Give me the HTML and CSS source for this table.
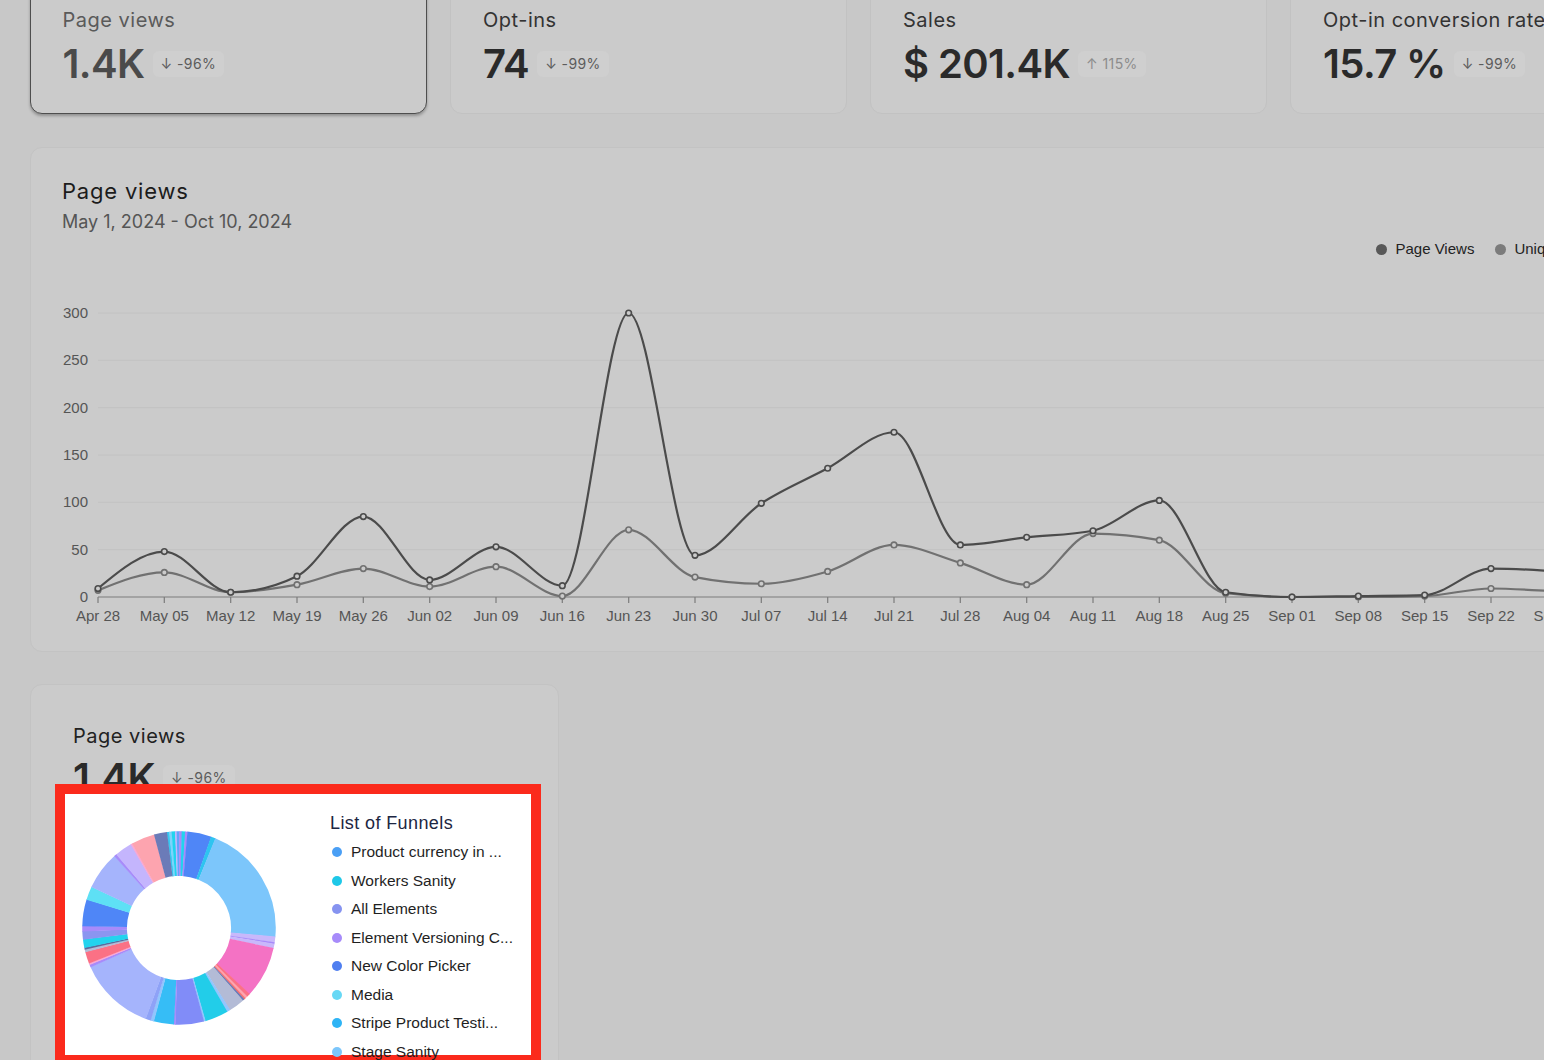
FILE: index.html
```html
<!DOCTYPE html>
<html lang="en">
<head>
<meta charset="utf-8">
<title>Funnel analytics</title>
<link rel="stylesheet" href="styles.css">
</head>
<body>
<div class="page">
  <section class="stats">
    <div class="stat stat--active">
      <div class="stat-label">Page views</div>
      <div class="stat-row"><span class="stat-value">1.4K</span><span class="badge">↓ -96%</span></div>
    </div>
    <div class="stat">
      <div class="stat-label">Opt-ins</div>
      <div class="stat-row"><span class="stat-value">74</span><span class="badge">↓ -99%</span></div>
    </div>
    <div class="stat">
      <div class="stat-label">Sales</div>
      <div class="stat-row"><span class="stat-value">$ 201.4K</span><span class="badge badge--up">↑ 115%</span></div>
    </div>
    <div class="stat">
      <div class="stat-label">Opt-in conversion rate</div>
      <div class="stat-row"><span class="stat-value">15.7 %</span><span class="badge">↓ -99%</span></div>
    </div>
  </section>

  <section class="card chart-card">
    <div class="chart-head">
      <h2 class="chart-title">Page views</h2>
      <div class="chart-date">May 1, 2024 - Oct 10, 2024</div>
    </div>
    <div class="legend">
      <span class="legend-item"><i class="ldot ldot--pv"></i>Page Views</span>
      <span class="legend-item"><i class="ldot ldot--uv"></i>Unique Visitors</span>
    </div>
    <svg class="chart" width="1655" height="370" viewBox="0 0 1655 370">
      <g class="grid">
        <line x1="67" x2="1655" y1="48" y2="48"/>
        <line x1="67" x2="1655" y1="95.3" y2="95.3"/>
        <line x1="67" x2="1655" y1="142.7" y2="142.7"/>
        <line x1="67" x2="1655" y1="190" y2="190"/>
        <line x1="67" x2="1655" y1="237.3" y2="237.3"/>
        <line x1="67" x2="1655" y1="284.7" y2="284.7"/>
      </g>
      <g class="ylabels">
        <text x="57" y="53">300</text>
        <text x="57" y="100.3">250</text>
        <text x="57" y="147.7">200</text>
        <text x="57" y="195">150</text>
        <text x="57" y="242.3">100</text>
        <text x="57" y="289.7">50</text>
        <text x="57" y="337">0</text>
      </g>
      <line class="axis" x1="67" x2="1655" y1="332" y2="332"/>
      <path class="ticks" d="M67 332v6M133.3 332v6M199.7 332v6M266 332v6M332.3 332v6M398.7 332v6M465 332v6M531.3 332v6M597.7 332v6M664 332v6M730.3 332v6M796.7 332v6M863 332v6M929.3 332v6M995.7 332v6M1062 332v6M1128.3 332v6M1194.7 332v6M1261 332v6M1327.3 332v6M1393.7 332v6M1460 332v6M1526.3 332v6M1592.7 332v6"/>
      <g class="xlabels">
        <text x="67" y="356">Apr 28</text>
        <text x="133.3" y="356">May 05</text>
        <text x="199.7" y="356">May 12</text>
        <text x="266" y="356">May 19</text>
        <text x="332.3" y="356">May 26</text>
        <text x="398.7" y="356">Jun 02</text>
        <text x="465" y="356">Jun 09</text>
        <text x="531.3" y="356">Jun 16</text>
        <text x="597.7" y="356">Jun 23</text>
        <text x="664" y="356">Jun 30</text>
        <text x="730.3" y="356">Jul 07</text>
        <text x="796.7" y="356">Jul 14</text>
        <text x="863" y="356">Jul 21</text>
        <text x="929.3" y="356">Jul 28</text>
        <text x="995.7" y="356">Aug 04</text>
        <text x="1062" y="356">Aug 11</text>
        <text x="1128.3" y="356">Aug 18</text>
        <text x="1194.7" y="356">Aug 25</text>
        <text x="1261" y="356">Sep 01</text>
        <text x="1327.3" y="356">Sep 08</text>
        <text x="1393.7" y="356">Sep 15</text>
        <text x="1460" y="356">Sep 22</text>
        <text x="1526.3" y="356">Sep 29</text>
        <text x="1592.7" y="356">Oct 06</text>
      </g>
      <path id="line-uv" class="line line--uv" d=""/>
      <path id="line-pv" class="line line--pv" d=""/>
      <g id="pts-uv" class="pts pts--uv"></g>
      <g id="pts-pv" class="pts pts--pv"></g>
    </svg>
  </section>

  <section class="card funnel-card">
    <div class="stat-label stat-label--dark">Page views</div>
    <div class="stat-row"><span class="stat-value">1.4K</span><span class="badge">↓ -96%</span></div>

    <div class="highlight">
      <svg class="donut" width="194" height="194" viewBox="-97 -97 194 194">
        <g id="donut-slices"></g>
      </svg>
      <div class="funnels">
        <div class="funnels-title">List of Funnels</div>
        <ul class="funnels-list">
          <li><i class="fdot c1"></i>Product currency in ...</li>
          <li><i class="fdot c2"></i>Workers Sanity</li>
          <li><i class="fdot c3"></i>All Elements</li>
          <li><i class="fdot c4"></i>Element Versioning C...</li>
          <li><i class="fdot c5"></i>New Color Picker</li>
          <li><i class="fdot c6"></i>Media</li>
          <li><i class="fdot c7"></i>Stripe Product Testi...</li>
          <li><i class="fdot c8"></i>Stage Sanity</li>
        </ul>
      </div>
    </div>
  </section>
</div>
<script src="script.js"></script>
</body>
</html>
```

FILE: styles.css
```css
* { box-sizing: border-box; margin: 0; padding: 0; }
html, body { width: 1544px; height: 1060px; overflow: hidden; }
body {
  background: #c8c8c8;
  font-family: Inter, "Noto Sans", sans-serif;
  color: #2a2a2a;
}
.page { width: 1687px; padding-left: 30px; }

/* stat cards */
.stats { display: flex; gap: 23px; margin-top: -16px; }
.stat {
  flex: none;
  width: 397px;
  height: 130px;
  background: #cbcbcb;
  border: 1px solid #c2c2c2;
  border-radius: 12px;
  padding: 21px 32px 0;
}
.stat--active {
  border: 1.5px solid #4e4e4e;
  box-shadow: 0 2px 3px rgba(0, 0, 0, 0.28);
  padding-left: 31.5px;
}
.stat-label { font-size: 20px; line-height: 28px; letter-spacing: 0.5px; color: #333; }
.stat--active .stat-label { color: #5a5a5a; }
.stat-row { display: flex; align-items: center; gap: 8px; margin-top: 8px; height: 44px; }
.stat-value { font-size: 40px; font-weight: 600; line-height: 44px; color: #2a2a2a; letter-spacing: -0.6px; }
.stat--active .stat-value { color: #4a4a4a; }
.badge {
  font-size: 14px;
  line-height: 26px;
  padding: 0 8px;
  border-radius: 6px;
  background: #cfcfcf;
  color: #5c5c5c;
  letter-spacing: 0.4px;
}
.badge--up { color: #8c8c8c; }

/* generic card */
.card {
  background: #cbcbcb;
  border: 1px solid #c3c3c3;
  border-radius: 12px;
}

/* chart card */
.chart-card { margin-top: 33px; width: 1657px; height: 505px; padding: 28px 0 16px; overflow: hidden; }
.chart-head { padding: 0 31px; }
.chart-title { font-size: 22px; line-height: 30px; font-weight: 400; letter-spacing: 0.8px; color: #1c1c1c; }
.chart-date { margin-top: 3px; font-size: 18px; line-height: 26px; letter-spacing: 0; color: #555; }
.legend {
  margin-top: 4px;
  height: 20px;
  display: flex;
  justify-content: flex-end;
  gap: 21px;
  padding-right: 71px;
  font-family: "Liberation Sans", Arial, sans-serif;
  font-size: 15px;
  line-height: 20px;
  color: #222;
}
.legend-item { display: flex; align-items: center; gap: 8px; }
.ldot { display: block; width: 11px; height: 11px; border-radius: 50%; }
.ldot--pv { background: #585858; }
.ldot--uv { background: #7b7b7b; }
.chart { display: block; margin-top: 6px; font-family: "Liberation Sans", Arial, sans-serif; }
.grid line { stroke: #c2c2c2; stroke-width: 1; }
.axis, .ticks { stroke: #7c7c7c; stroke-width: 1.2; fill: none; }
.ylabels text { font-size: 15px; fill: #555; text-anchor: end; }
.xlabels text { font-size: 15px; fill: #555; text-anchor: middle; }
.line { fill: none; stroke-width: 2.2; stroke-linejoin: round; }
.line--pv { stroke: #4b4b4b; }
.line--uv { stroke: #717171; }
.pts circle { fill: #cbcbcb; stroke-width: 1.6; }
.pts--pv circle { stroke: #4b4b4b; }
.pts--uv circle { stroke: #717171; }

/* funnel card */
.funnel-card {
  position: relative;
  margin-top: 32px;
  width: 529px;
  height: 420px;
  padding: 37px 42px;
}
.stat-label--dark { color: #222; }
.funnel-card .stat-row { margin-top: 6px; }

.highlight {
  position: absolute;
  left: 24px;
  top: 99px;
  width: 486px;
  height: 281px;
  border: 10px solid #fb2a1c;
  background: #fff;
  display: flex;
  align-items: flex-start;
}
.donut { display: block; flex: none; margin: 37px 0 0 17px; }
.funnels { margin: 17px 0 0 54px; font-family: "Liberation Sans", Arial, sans-serif; }
.funnels-title { font-size: 18px; line-height: 24px; letter-spacing: 0.4px; color: #1c2642; }
.funnels-list { list-style: none; margin-top: 3px; }
.funnels-list li {
  display: flex;
  align-items: center;
  gap: 9px;
  height: 28.5px;
  padding-left: 2px;
  font-size: 15.5px;
  color: #1f1f1f;
  white-space: nowrap;
}
.fdot { display: block; flex: none; width: 10px; height: 10px; border-radius: 50%; }
.c1 { background: #4a9ff5; }
.c2 { background: #1ec8e8; }
.c3 { background: #8693f0; }
.c4 { background: #a78bfa; }
.c5 { background: #4f7ff0; }
.c6 { background: #67d8f5; }
.c7 { background: #2eb4f5; }
.c8 { background: #7cc6fb; }
```

FILE: script.js
```js
(function () {
  var NS = 'http://www.w3.org/2000/svg';
  var X0 = 67, DX = 66.333, Y0 = 332, K = 0.9467;
  var pv = [9, 48, 5, 22, 85, 18, 53, 12, 300, 44, 99, 136, 174, 55, 63, 70, 102, 5, 0, 1, 2, 30, 27, 20];
  var uv = [7, 26, 5, 13, 30, 11, 32, 1, 71, 21, 14, 27, 55, 36, 13, 67, 60, 4, 0, 0, 1, 9, 6, 4];

  function toPts(d) { return d.map(function (v, i) { return [X0 + i * DX, Y0 - v * K]; }); }
  function sign(x) { return x < 0 ? -1 : 1; }
  function f(n) { return n.toFixed(2); }

  function monotone(p) {
    var n = p.length, t = new Array(n), i;
    for (i = 1; i < n - 1; i++) {
      var h0 = p[i][0] - p[i - 1][0], h1 = p[i + 1][0] - p[i][0];
      var s0 = (p[i][1] - p[i - 1][1]) / h0, s1 = (p[i + 1][1] - p[i][1]) / h1;
      var pp = (s0 * h1 + s1 * h0) / (h0 + h1);
      t[i] = (sign(s0) + sign(s1)) * Math.min(Math.abs(s0), Math.abs(s1), 0.5 * Math.abs(pp)) || 0;
    }
    var h = p[1][0] - p[0][0];
    t[0] = (3 * (p[1][1] - p[0][1]) / h - t[1]) / 2;
    h = p[n - 1][0] - p[n - 2][0];
    t[n - 1] = (3 * (p[n - 1][1] - p[n - 2][1]) / h - t[n - 2]) / 2;
    var d = 'M' + f(p[0][0]) + ' ' + f(p[0][1]);
    for (i = 0; i < n - 1; i++) {
      var dx = (p[i + 1][0] - p[i][0]) / 3;
      d += 'C' + f(p[i][0] + dx) + ' ' + f(p[i][1] + dx * t[i]) + ' ' +
        f(p[i + 1][0] - dx) + ' ' + f(p[i + 1][1] - dx * t[i + 1]) + ' ' +
        f(p[i + 1][0]) + ' ' + f(p[i + 1][1]);
    }
    return d;
  }

  function draw(data, lineId, ptsId) {
    var p = toPts(data);
    document.getElementById(lineId).setAttribute('d', monotone(p));
    var g = document.getElementById(ptsId);
    p.forEach(function (q) {
      var c = document.createElementNS(NS, 'circle');
      c.setAttribute('cx', f(q[0]));
      c.setAttribute('cy', f(q[1]));
      c.setAttribute('r', '2.8');
      g.appendChild(c);
    });
  }
  draw(uv, 'line-uv', 'pts-uv');
  draw(pv, 'line-pv', 'pts-pv');

  var slices = [
    ['#38c8f0', 1.5], ['#7dd3fc', 1.5], ['#22d3ee', 2], ['#c4b5fd', 1], ['#60a5fa', 1.5],
    ['#a78bfa', 1.5], ['#22d3ee', 2], ['#a78bfa', 1.4],
    ['#4f86f7', 14.3], ['#2ec4f0', 2.7], ['#7cc6fb', 73],
    ['#c8b8fb', 3.5], ['#a78bfa', 0.8], ['#c8b8fb', 2.7],
    ['#f472c4', 31], ['#fb7185', 2], ['#fda4af', 1.5], ['#f87171', 1], ['#6b7bb8', 1],
    ['#b3bbd6', 9.5], ['#93c5fd', 2], ['#22cde9', 14], ['#93c5fd', 1], ['#818cf8', 17],
    ['#a78bfa', 1], ['#36bdf6', 12], ['#93c5fd', 2], ['#8ea2f7', 3], ['#a5b4fc', 46],
    ['#a78bfa', 1.5], ['#f9a8d4', 1], ['#fb7185', 7], ['#b3bbd6', 1.5], ['#5b6b9c', 1],
    ['#22d3ee', 5], ['#8b95f0', 5], ['#a78bfa', 3], ['#4f86f7', 16], ['#5ee0f5', 8],
    ['#a5b4fc', 23], ['#a78bfa', 1.5], ['#c4b5fd', 10.5], ['#f9a8d4', 1], ['#fda4af', 14],
    ['#6b7bb8', 7.6]
  ];
  var a = 352.6;
  var dg = document.getElementById('donut-slices');
  slices.forEach(function (s) {
    var c = document.createElementNS(NS, 'circle');
    c.setAttribute('cx', '0');
    c.setAttribute('cy', '0');
    c.setAttribute('r', '74.4');
    c.setAttribute('fill', 'none');
    c.setAttribute('stroke', s[0]);
    c.setAttribute('stroke-width', '44.7');
    c.setAttribute('pathLength', '360');
    var len = s[1] + 0.35;
    c.setAttribute('stroke-dasharray', len + ' ' + (360 - len));
    c.setAttribute('transform', 'rotate(' + (a - 90) + ')');
    dg.appendChild(c);
    a += s[1];
  });
})();
```
